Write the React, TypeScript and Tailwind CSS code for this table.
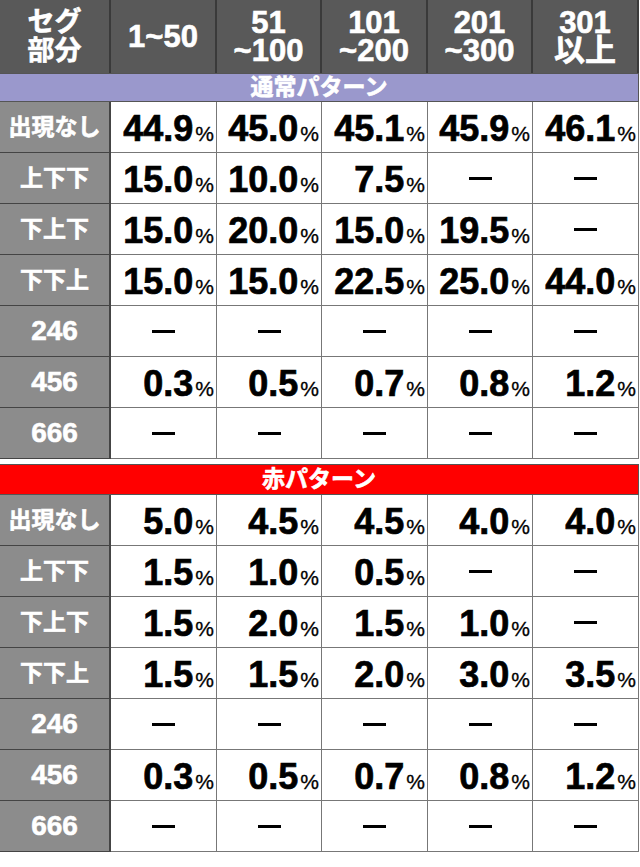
import React from "react";

const cols = ["1~50", "51\n~100", "101\n~200", "201\n~300", "301\n以上"];

type Row = { label: string; vals: (string | null)[] };

const normal: Row[] = [
  { label: "出現なし", vals: ["44.9", "45.0", "45.1", "45.9", "46.1"] },
  { label: "上下下", vals: ["15.0", "10.0", "7.5", null, null] },
  { label: "下上下", vals: ["15.0", "20.0", "15.0", "19.5", null] },
  { label: "下下上", vals: ["15.0", "15.0", "22.5", "25.0", "44.0"] },
  { label: "246", vals: [null, null, null, null, null] },
  { label: "456", vals: ["0.3", "0.5", "0.7", "0.8", "1.2"] },
  { label: "666", vals: [null, null, null, null, null] },
];

const red: Row[] = [
  { label: "出現なし", vals: ["5.0", "4.5", "4.5", "4.0", "4.0"] },
  { label: "上下下", vals: ["1.5", "1.0", "0.5", null, null] },
  { label: "下上下", vals: ["1.5", "2.0", "1.5", "1.0", null] },
  { label: "下下上", vals: ["1.5", "1.5", "2.0", "3.0", "3.5"] },
  { label: "246", vals: [null, null, null, null, null] },
  { label: "456", vals: ["0.3", "0.5", "0.7", "0.8", "1.2"] },
  { label: "666", vals: [null, null, null, null, null] },
];

const grid = "grid grid-cols-[111px_106px_105px_106px_105px_106px]";

function Section({ title, rows, barClass }: { title: string; rows: Row[]; barClass: string }) {
  return (
    <div>
      <div
        className={`${barClass} flex items-center justify-center border-y border-r border-[#555] text-white font-bold text-[23px] leading-none [-webkit-text-stroke:0.6px_white]`}
      >
        {title}
      </div>
      {rows.map((r, i) => (
        <div key={i} className={grid}>
          <div className="h-[51px] bg-[#8c8c8c] border-r-2 border-b border-[#444] flex items-center justify-center text-white font-bold text-[23px] leading-none [-webkit-text-stroke:0.6px_white]">
            {/^\d+$/.test(r.label) ? <span className="text-[28px]">{r.label}</span> : r.label}
          </div>
          {r.vals.map((v, j) => (
            <div
              key={j}
              className="h-[51px] bg-white border-r border-b border-[#777] flex items-center justify-end pr-[2px] text-black"
            >
              {v === null ? (
                <div className="w-full flex justify-center pl-[2px]">
                  <div className="w-[23px] h-[3px] bg-black" />
                </div>
              ) : (
                <span className="flex items-baseline mt-[3px]">
                  <span className="font-bold text-[36px] leading-none [-webkit-text-stroke:0.7px_black]">
                    {v}
                  </span>
                  <span className="text-[21px] leading-none ml-[2px] [-webkit-text-stroke:0.3px_black]">%</span>
                </span>
              )}
            </div>
          ))}
        </div>
      ))}
    </div>
  );
}

export default function App() {
  return (
    <div className="w-[640px] h-[867px] bg-white font-['Liberation_Sans','Noto_Sans_CJK_JP',sans-serif]">
      <div className={grid}>
        <div className="h-[73px] bg-[#595959] border-r-2 border-[#3a3a3a] flex items-center justify-center text-center text-white font-bold text-[27px] leading-[29px] [-webkit-text-stroke:0.6px_white]">
          セグ
          <br />
          部分
        </div>
        {cols.map((c, i) => (
          <div
            key={i}
            className="h-[73px] bg-[#595959] border-r-2 border-[#3a3a3a] flex items-center justify-center text-center text-white font-bold text-[31px] leading-[28px] whitespace-pre-line [-webkit-text-stroke:0.6px_white]"
          >
            {c}
          </div>
        ))}
      </div>
      <Section title="通常パターン" rows={normal} barClass="h-[29px] w-[639px] bg-[#9a98cc]" />
      <div className="h-[5px]" />
      <Section title="赤パターン" rows={red} barClass="h-[31px] w-[639px] bg-[#ff0000]" />
    </div>
  );
}
